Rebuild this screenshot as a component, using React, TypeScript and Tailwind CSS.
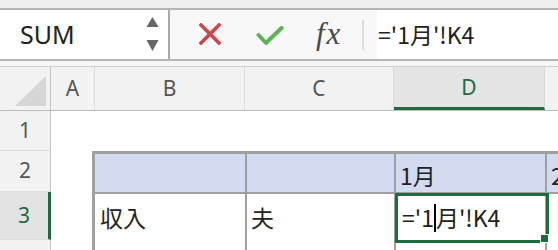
const CJK = "font-['Noto_Sans_CJK_JP',sans-serif]";
const LATIN = "font-['Noto_Sans','Noto_Sans_CJK_JP',sans-serif]";
const LINE = 'border-[#a0a0a0]';

const RowHead = ({ n, active = false }: { n: number; active?: boolean }) => (
  <div
    className={`flex items-center justify-center border-b border-[#dcdcdc] text-[21px] ${LATIN} ${
      active ? 'bg-[#e3e3e3] text-[#1e6b3e] border-r-[3px] border-r-[#1e6b3e]' : 'bg-[#f2f2f2] text-[#555] border-r border-r-[#c4c4c4]'
    }`}
  >
    {n}
  </div>
);

export default function App() {
  return (
    <div className="w-[558px] h-[250px] overflow-hidden bg-white flex flex-col">
      {/* Top strip */}
      <div className="h-[8px] bg-[#efefef] shrink-0" />

      {/* Formula bar */}
      <div className="h-[53px] shrink-0 flex border-y-2 border-[#b5b5b5] bg-[#f8f8f8]">
        <div className="w-[170px] shrink-0 bg-white border-r-2 border-[#a8a8a8] flex items-center pl-[20px]">
          <span className={`text-[25px] text-[#222] ${LATIN}`}>SUM</span>
          <svg width="13" height="36" viewBox="0 0 13 36" className="ml-auto mr-[9px]">
            <path d="M6.5 0 L12.5 10 L0.5 10 Z" fill="#666" />
            <path d="M0.5 23 L12.5 23 L6.5 34 Z" fill="#666" />
          </svg>
        </div>

        <div className="flex items-center">
          {/* cancel */}
          <svg width="22" height="22" viewBox="0 0 22 22" className="ml-[29px] mt-[-2px]">
            <path d="M2 2 L20 20 M20 2 L2 20" stroke="#d6404a" strokeWidth="3.6" strokeLinecap="square" />
          </svg>
          {/* enter */}
          <svg width="28" height="20" viewBox="0 0 28 20" className="ml-[35px] mt-[2px]">
            <path d="M2.5 9 L10 17 L25.5 2" stroke="#5ab552" strokeWidth="4" fill="none" strokeLinecap="round" strokeLinejoin="round" />
          </svg>
          <span className="ml-[32px] w-[30px] text-[31px] italic text-[#484848] font-['Liberation_Serif',serif] leading-none tracking-[2px] mt-[-2px]">
            fx
          </span>
          <div className="ml-[16px] w-[2px] h-[30px] bg-[#dddddd]" />
        </div>

        <div className="ml-[13px] flex-1 bg-white flex items-center pl-[1px]">
          <span className={`text-[23px] text-[#222] ${CJK}`}>='1月'!K4</span>
        </div>
      </div>

      <div className="h-[6px] shrink-0 bg-[#f5f5f5] border-b border-[#cfcfcf]" />

      {/* Column headers */}
      <div className={`h-[44px] shrink-0 grid grid-cols-[51px_44px_150px_149px_151px_1fr] bg-[#f2f2f2] border-b border-[#bdbdbd] text-[21px] text-[#555] ${LATIN}`}>
        <div className="border-r border-[#c4c4c4] flex items-end justify-end pr-[4px] pb-[4px]">
          <svg width="31" height="30" viewBox="0 0 31 30">
            <path d="M31 0 L31 30 L0 30 Z" fill="#d6d6d6" />
          </svg>
        </div>
        <div className="border-r border-[#dadada] flex items-center justify-center">A</div>
        <div className="border-r border-[#dadada] flex items-center justify-center">B</div>
        <div className="border-r border-[#dadada] flex items-center justify-center">C</div>
        <div className="border-r border-[#dadada] bg-[#e5e5e5] border-b-[3px] border-b-[#1e6b3e] flex items-center justify-center text-[#1e6b3e] pt-[2px]">
          D
        </div>
        <div />
      </div>

      {/* Sheet body */}
      <div className={`flex-1 grid grid-cols-[51px_41px_153px_149px_151px_1fr] grid-rows-[40px_41px_48px_1fr] text-[23px] text-[#222] ${CJK}`}>
        {/* row 1 */}
        <RowHead n={1} />
        <div className="col-span-5" />

        {/* row 2 */}
        <RowHead n={2} />
        <div />
        <div className={`border-t-[3px] border-l-[3px] ${LINE} bg-[#d3dbf0]`} />
        <div className={`border-t-[3px] border-l-2 ${LINE} bg-[#d3dbf0]`} />
        <div className={`border-t-[3px] border-l-2 ${LINE} bg-[#d3dbf0] flex items-center pl-[4px] pt-[4px]`}>1月</div>
        <div className={`border-t-[3px] border-l-2 ${LINE} bg-[#d3dbf0] flex items-center pl-[4px] pt-[4px] overflow-hidden whitespace-nowrap`}>2月</div>

        {/* row 3 */}
        <RowHead n={3} active />
        <div />
        <div className={`border-t-2 border-l-[3px] ${LINE} flex items-center pl-[5px] pt-[1px]`}>収入</div>
        <div className={`border-t-2 border-l-2 ${LINE} flex items-center pl-[4px] pt-[1px]`}>夫</div>
        <div className={`relative border-t-2 border-l-2 ${LINE} flex items-center pl-[6px] pt-[1px] whitespace-nowrap`}>
          <span>='1</span>
          <span className="inline-block w-[2px] h-[28px] bg-black" />
          <span>月'!K4</span>
          <div className="absolute -left-[1px] -top-[1px] w-[154px] h-[50px] border-[3px] border-[#1e6b3e]" />
          <div className="absolute -right-[4px] -bottom-[3px] w-[9px] h-[9px] bg-[#1e6b3e] border border-white" />
        </div>
        <div className={`border-t-2 border-l-2 ${LINE}`} />

        {/* row 4 */}
        <div className="bg-[#f2f2f2] border-r border-[#c4c4c4]" />
        <div />
        <div className={`border-l-[3px] ${LINE}`} />
        <div className={`border-l-2 ${LINE}`} />
        <div className={`border-l-2 ${LINE}`} />
        <div className={`border-l-2 ${LINE}`} />
      </div>
    </div>
  );
}
